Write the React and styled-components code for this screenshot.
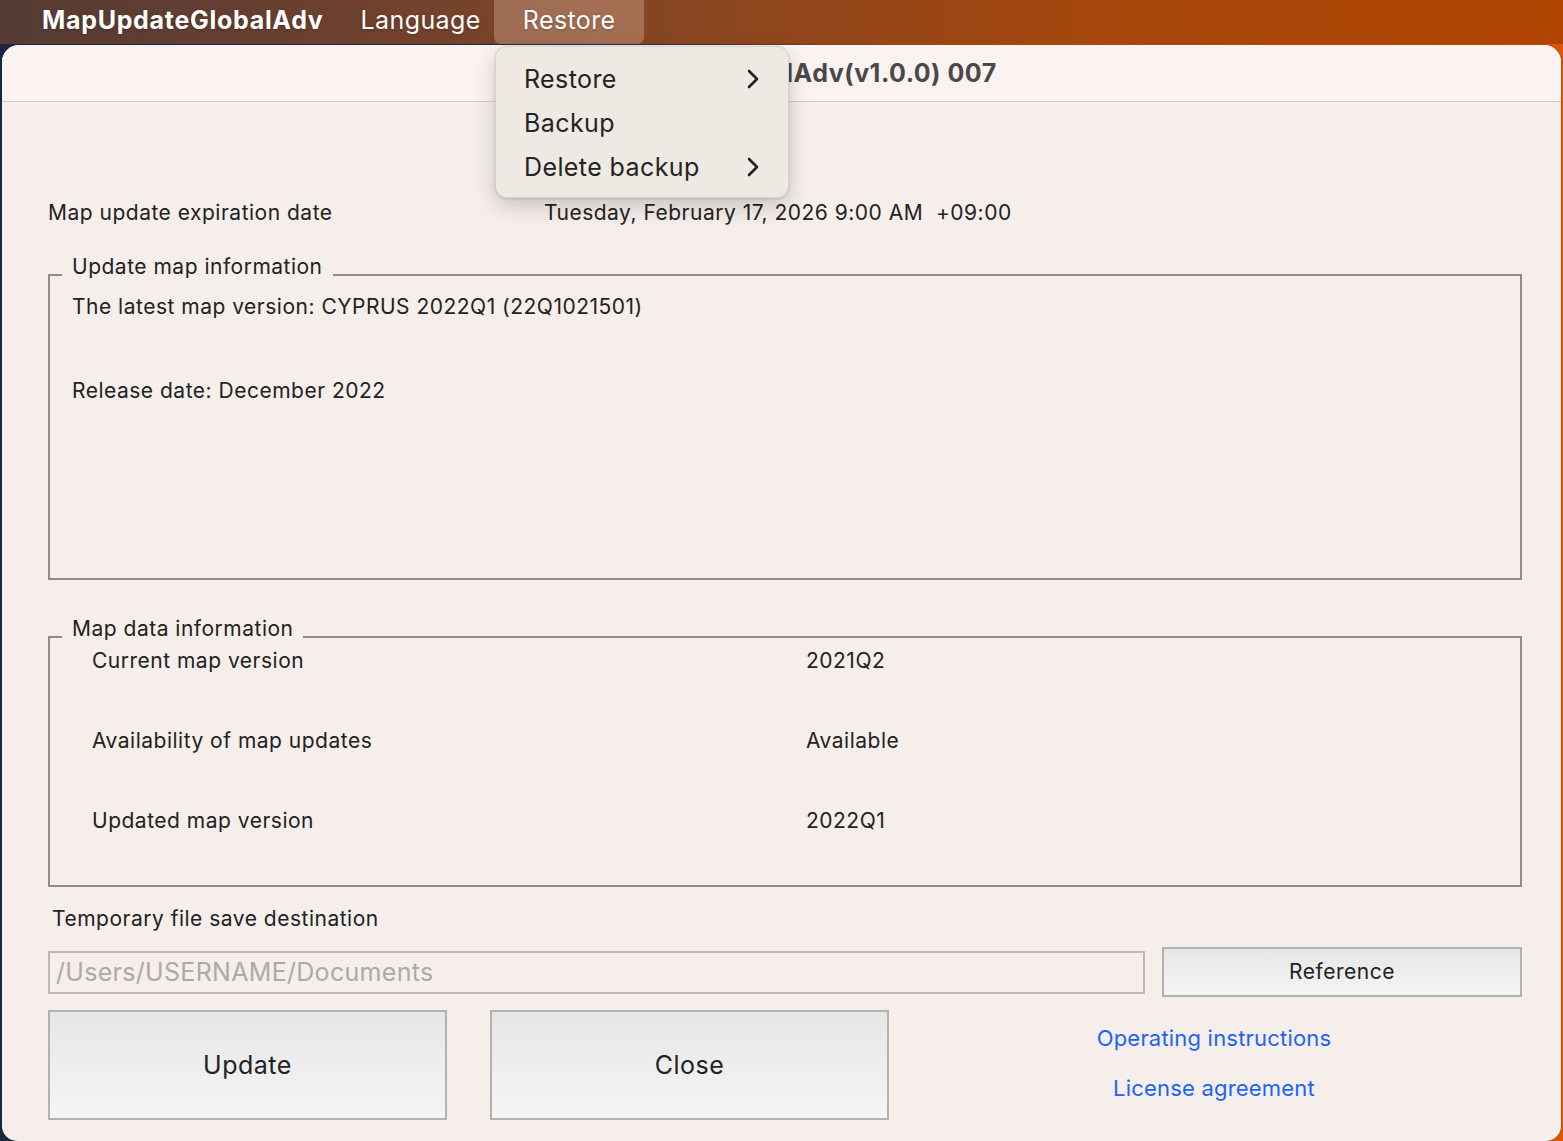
import React from 'react';
import styled, { createGlobalStyle } from 'styled-components';

const Global = createGlobalStyle`
  html, body { margin: 0; padding: 0; }
  body {
    font-family: "Inter", "Open Sans", "Liberation Sans", sans-serif;
    -webkit-font-smoothing: antialiased;
  }
`;

const Desktop = styled.div`
  position: relative;
  width: 1563px;
  height: 1141px;
  overflow: hidden;
  display: flex;
  flex-direction: column;
  background: linear-gradient(90deg, #1b2744 0%, #2c2f4a 40%, #c4520f 60%, #d9560a 100%);
`;

const MenuBar = styled.div`
  height: 44px;
  flex: none;
  display: flex;
  align-items: stretch;
  padding-left: 29px;
  background: linear-gradient(90deg, #553b33 0%, #6a4030 20%, #8a4620 45%, #a5460c 70%, #b04300 100%);
`;

const MenuTitle = styled.div`
  display: flex;
  align-items: center;
  padding: 0 ${p => (p.$open ? '28px 5px 29px' : '13px 5px')};
  margin-right: ${p => p.$gap || 0}px;
  font-size: 25px;
  font-weight: ${p => (p.$app ? 700 : 400)};
  letter-spacing: ${p => (p.$app ? '0.7px' : '0.4px')};
  color: #fff;
  text-shadow: 0 1px 3px rgba(0, 0, 0, 0.25);
  border-radius: 0 0 7px 7px;
  background: ${p => (p.$open ? 'rgba(255, 220, 200, 0.28)' : 'transparent')};
`;

const Window = styled.div`
  flex: 1;
  margin: 1px 2px 0 2px;
  border-radius: 17px 17px 15px 15px;
  overflow: hidden;
  background: #f5eeeb;
  display: flex;
  flex-direction: column;
  box-shadow: 0 0 0 1px rgba(0, 0, 0, 0.12);
`;

const TitleBar = styled.div`
  height: 56px;
  flex: none;
  display: flex;
  align-items: center;
  justify-content: center;
  background: #faf3f1;
  border-bottom: 1px solid #d3cdcb;
  font-size: 25px;
  font-weight: 700;
  letter-spacing: 0.5px;
  color: #4a4848;
`;

const Content = styled.div`
  padding: 99px 39px 0 46px;
  color: #222;
  font-size: 21px;
  letter-spacing: 0.5px;
  line-height: 24px;
`;

const InfoRow = styled.div`
  display: flex;
  margin-top: ${p => p.$top || 0}px;
  padding-left: ${p => p.$indent || 0}px;
`;

const InfoLabel = styled.div`
  width: ${p => p.$w}px;
  flex: none;
`;

const InfoValue = styled.div`
  white-space: pre;
`;

const Group = styled.div`
  position: relative;
  box-sizing: border-box;
  height: ${p => p.$h}px;
  margin-top: ${p => p.$top}px;
  border: 2px solid #8f8b8a;
  padding: ${p => p.$pad};
`;

const Legend = styled.div`
  position: absolute;
  left: 12px;
  top: -21px;
  padding: 0 10px;
  line-height: 24px;
  background: #f5eeeb;
`;

const Line = styled.div`
  margin-bottom: ${p => p.$gap || 0}px;
`;

const Caption = styled.div`
  margin-top: 20px;
  padding-left: 4px;
`;

const PathRow = styled.div`
  display: flex;
  align-items: center;
  gap: 17px;
  margin-top: 16px;
`;

const PathInput = styled.div`
  box-sizing: border-box;
  width: 1097px;
  height: 43px;
  border: 2px solid #bdb9b8;
  padding: 0 6px;
  display: flex;
  align-items: center;
  font-size: 25px;
  letter-spacing: 0.3px;
  color: #acaaa9;
`;

const Button = styled.div`
  box-sizing: border-box;
  width: ${p => p.$w}px;
  height: ${p => p.$h}px;
  flex: none;
  display: flex;
  align-items: center;
  justify-content: center;
  border: 2px solid #b4b2b1;
  background: linear-gradient(180deg, #e6e6e6 0%, #f5f5f5 100%);
  font-size: ${p => p.$size}px;
  color: #222;
`;

const ActionRow = styled.div`
  display: flex;
  margin-top: 13px;
  gap: 43px;
`;

const Links = styled.div`
  flex: 1;
  margin-left: -26px;
  padding-top: 16px;
  display: flex;
  flex-direction: column;
  align-items: center;
  gap: 26px;
`;

const LinkText = styled.a`
  color: #1d63f6;
  font-size: 22px;
  letter-spacing: 0.2px;
  text-decoration: none;
`;

const Dropdown = styled.div`
  position: absolute;
  left: 495px;
  top: 46px;
  width: 294px;
  height: 152px;
  box-sizing: border-box;
  padding-top: 10px;
  border-radius: 12px;
  background: #efe9e4;
  border: 1px solid rgba(0, 0, 0, 0.1);
  box-shadow: 0 8px 22px rgba(0, 0, 0, 0.18), 0 1px 3px rgba(0, 0, 0, 0.12);
`;

const DropItem = styled.div`
  height: 44px;
  display: flex;
  align-items: center;
  justify-content: space-between;
  padding: 0 28px 0 28px;
  font-size: 25px;
  letter-spacing: 0.4px;
  color: #232323;
`;

const Chevron = () => (
  <svg width="14" height="22" viewBox="0 0 14 22">
    <path d="M3 3 L11 11 L3 19" fill="none" stroke="#222" strokeWidth="2.6" strokeLinecap="round" strokeLinejoin="round" />
  </svg>
);

export default function App() {
  return (
    <Desktop>
      <Global />
      <MenuBar>
        <MenuTitle $app $gap={11}>MapUpdateGlobalAdv</MenuTitle>
        <MenuTitle>Language</MenuTitle>
        <MenuTitle $open>Restore</MenuTitle>
      </MenuBar>
      <Window>
        <TitleBar>MapUpdateGlobalAdv(v1.0.0) 007</TitleBar>
        <Content>
          <InfoRow>
            <InfoLabel $w={496}>Map update expiration date</InfoLabel>
            <InfoValue>Tuesday, February 17, 2026 9:00 AM  +09:00</InfoValue>
          </InfoRow>

          <Group $h={306} $top={49} $pad="19px 22px 0">
            <Legend>Update map information</Legend>
            <Line $gap={60}>The latest map version: CYPRUS 2022Q1 (22Q1021501)</Line>
            <Line>Release date: December 2022</Line>
          </Group>

          <Group $h={251} $top={56} $pad="11px 0 0">
            <Legend>Map data information</Legend>
            <InfoRow $indent={42}>
              <InfoLabel $w={714}>Current map version</InfoLabel>
              <InfoValue>2021Q2</InfoValue>
            </InfoRow>
            <InfoRow $indent={42} $top={56}>
              <InfoLabel $w={714}>Availability of map updates</InfoLabel>
              <InfoValue>Available</InfoValue>
            </InfoRow>
            <InfoRow $indent={42} $top={56}>
              <InfoLabel $w={714}>Updated map version</InfoLabel>
              <InfoValue>2022Q1</InfoValue>
            </InfoRow>
          </Group>

          <Caption>Temporary file save destination</Caption>
          <PathRow>
            <PathInput>/Users/USERNAME/Documents</PathInput>
            <Button $w={360} $h={50} $size={21}>Reference</Button>
          </PathRow>

          <ActionRow>
            <Button $w={399} $h={110} $size={25}>Update</Button>
            <Button $w={399} $h={110} $size={25}>Close</Button>
            <Links>
              <LinkText>Operating instructions</LinkText>
              <LinkText>License agreement</LinkText>
            </Links>
          </ActionRow>
        </Content>
      </Window>

      <Dropdown>
        <DropItem>Restore<Chevron /></DropItem>
        <DropItem>Backup</DropItem>
        <DropItem>Delete backup<Chevron /></DropItem>
      </Dropdown>
    </Desktop>
  );
}
